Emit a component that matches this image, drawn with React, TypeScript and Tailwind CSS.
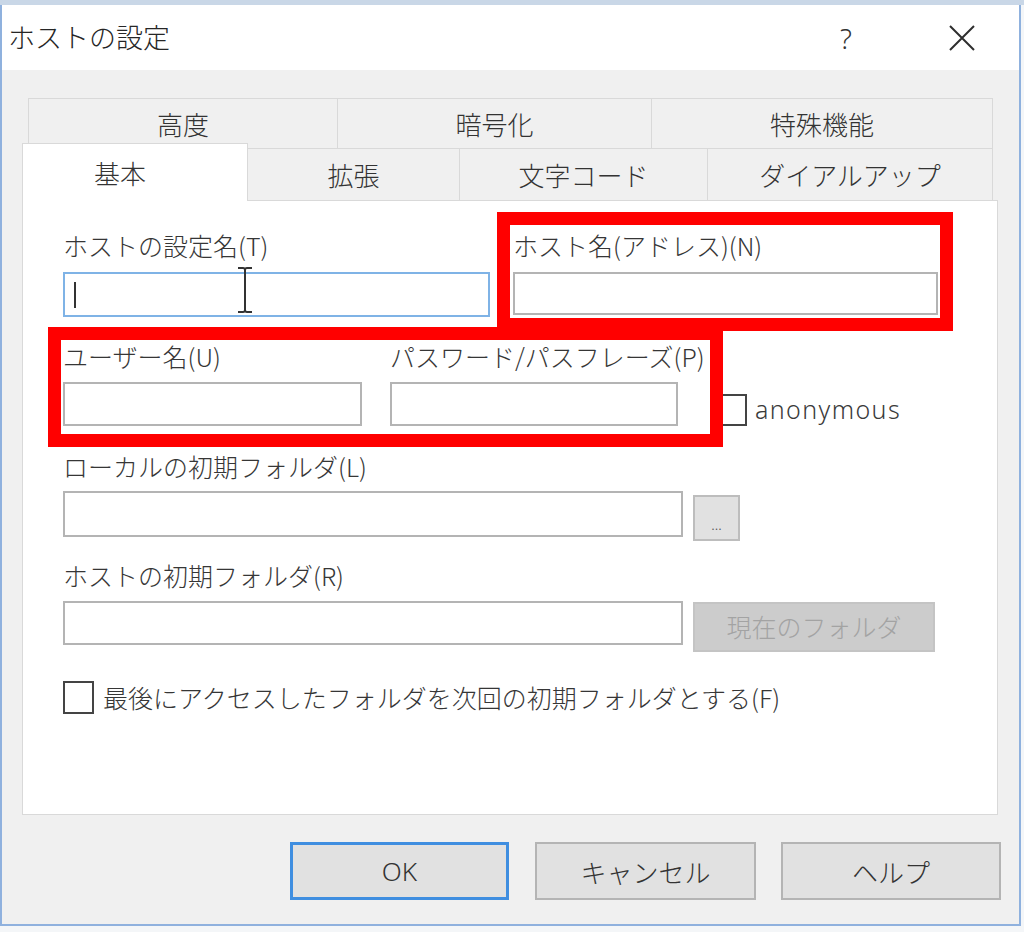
const jp = "font-['Noto_Sans_CJK_JP','Noto_Sans',sans-serif]";

function Tab({ label, w, h = 'h-[50px]', first = false }: { label: string; w: string; h?: string; first?: boolean }) {
  return (
    <div
      className={`${w} ${h} ${first ? 'border-l' : ''} border-t border-r border-[#d9d9d9] bg-[#f0f0f0] flex items-center justify-center text-[26px] text-[#333]`}
    >
      {label}
    </div>
  );
}

function Label({ children }: { children: string }) {
  return <div className="h-[30px] leading-[30px] text-[25px] text-[#363636] whitespace-nowrap">{children}</div>;
}

function Box({ w, h, className = '' }: { w: string; h: string; className?: string }) {
  return <div className={`${w} ${h} bg-white border-2 border-[#b4b4b4] ${className}`} />;
}

export default function App() {
  return (
    <div className={`relative w-[1024px] h-[932px] overflow-hidden bg-[#f4f6f8] font-light ${jp}`}>
      <div className="h-[5px] bg-[#c9d7e7]" />

      {/* dialog */}
      <div className="w-[1021px] h-[921px] border-x-2 border-b-2 border-[#8fb1de] bg-[#f0f0f0] flex flex-col">
        {/* title bar */}
        <div className="h-[65px] bg-white flex items-center shrink-0">
          <div className="pl-[6px] text-[27px] text-[#262626]">ホストの設定</div>
          <div className="ml-auto w-[40px] text-center text-[28px] text-[#333] font-['Noto_Sans',sans-serif] mr-[82px]">?</div>
          <svg className="w-[28px] h-[28px] mr-[43px]" viewBox="0 0 28 28" fill="none" stroke="#2e2e2e" strokeWidth="2">
            <path d="M2 2l24 24M26 2L2 26" />
          </svg>
        </div>

        {/* tabs */}
        <div className="pt-[28px]">
          <div className="ml-[26px] flex">
            <Tab label="高度" w="w-[310px]" first />
            <Tab label="暗号化" w="w-[314px]" />
            <Tab label="特殊機能" w="w-[341px]" />
          </div>
          <div className="ml-[20px] -mt-[5px] flex items-end relative z-10">
            <div className="w-[226px] h-[58px] -mb-px bg-white border-l border-t border-r border-[#d9d9d9] flex items-center justify-center pr-[30px] text-[26px] text-[#333]">
              基本
            </div>
            <Tab label="拡張" w="w-[212px]" h="h-[52px]" />
            <Tab label="文字コード" w="w-[248px]" h="h-[52px]" />
            <Tab label="ダイアルアップ" w="w-[285px]" h="h-[52px]" />
          </div>
        </div>

        {/* panel */}
        <div className="ml-[20px] w-[976px] h-[615px] bg-white border border-[#d9d9d9] pl-[40px] pt-[29px]">
          <div className="flex gap-[23px]">
            <div className="w-[427px]">
              <Label>ホストの設定名(T)</Label>
              <div className="mt-[12px] h-[45px] bg-white border-2 border-[#7fb3e6] flex items-center pl-[9px]">
                <div className="w-[2px] h-[26px] bg-[#333]" />
              </div>
            </div>
            <div className="w-[425px]">
              <Label>ホスト名(アドレス)(N)</Label>
              <Box w="w-full" h="h-[43px]" className="mt-[12px]" />
            </div>
          </div>

          <div className="mt-[24px] flex items-start">
            <div className="w-[299px]">
              <Label>ユーザー名(U)</Label>
              <Box w="w-full" h="h-[44px]" className="mt-[11px]" />
            </div>
            <div className="w-[288px] ml-[28px]">
              <Label>パスワード/パスフレーズ(P)</Label>
              <Box w="w-full" h="h-[44px]" className="mt-[11px]" />
            </div>
            <div className="ml-[37px] mt-[50px] flex items-center">
              <div className="w-[32px] h-[32px] bg-white border-2 border-[#444]" />
              <span className="ml-[8px] text-[25px] tracking-[1.4px] text-[#3a3a3a] font-['Noto_Sans',sans-serif]">anonymous</span>
            </div>
          </div>

          <div className="mt-[22px]">
            <Label>ローカルの初期フォルダ(L)</Label>
            <div className="mt-[10px] flex items-start">
              <Box w="w-[620px]" h="h-[46px]" />
              <div className="ml-[10px] mt-[4px] w-[47px] h-[46px] bg-[#e1e1e1] border-2 border-[#bdbdbd] flex items-end justify-center pb-[8px] text-[14px] leading-none text-[#555]">
                ...
              </div>
            </div>
          </div>

          <div className="mt-[19px]">
            <Label>ホストの初期フォルダ(R)</Label>
            <div className="mt-[11px] flex items-start">
              <Box w="w-[620px]" h="h-[44px]" />
              <div className="ml-[10px] mt-[1px] w-[242px] h-[50px] bg-[#cccccc] border-2 border-[#c4c4c4] flex items-center justify-center text-[25px] text-[#a3a3a3]">
                現在のフォルダ
              </div>
            </div>
          </div>

          <div className="mt-[27px] flex items-center">
            <div className="w-[31px] h-[33px] bg-white border-2 border-[#444]" />
            <span className="ml-[9px] text-[25px] text-[#363636] whitespace-nowrap">最後にアクセスしたフォルダを次回の初期フォルダとする(F)</span>
          </div>
        </div>

        {/* buttons */}
        <div className="mt-[27px] pr-[18px] flex justify-end text-[26px] text-[#333]">
          <div className="w-[219px] h-[58px] bg-[#e1e1e1] border-[3px] border-[#3f8ee0] flex items-center justify-center font-['Noto_Sans',sans-serif]">
            OK
          </div>
          <div className="ml-[26px] w-[221px] h-[58px] bg-[#e1e1e1] border-2 border-[#b4b4b4] flex items-center justify-center">
            キャンセル
          </div>
          <div className="ml-[25px] w-[220px] h-[58px] bg-[#e1e1e1] border-2 border-[#b4b4b4] flex items-center justify-center">
            ヘルプ
          </div>
        </div>
      </div>

      {/* I-beam mouse cursor over the first field */}
      <svg className="absolute left-[236px] top-[266px] w-[18px] h-[48px]" viewBox="0 0 18 48" fill="none" stroke="#333" strokeWidth="2">
        <path d="M2 2h5M11 2h5M9 3v42M2 46h5M11 46h5" />
        <path d="M7 2c1 0 2 1 2 2M11 2c-1 0-2 1-2 2M7 46c1 0 2-1 2-2M11 46c-1 0-2-1-2-2" />
      </svg>

      {/* red annotation boxes */}
      <div className="absolute left-[497px] top-[212px] w-[456px] h-[119px] border-[13px] border-[#ff0000]" />
      <div className="absolute left-[48px] top-[327px] w-[675px] h-[120px] border-[13px] border-[#ff0000]" />
    </div>
  );
}
